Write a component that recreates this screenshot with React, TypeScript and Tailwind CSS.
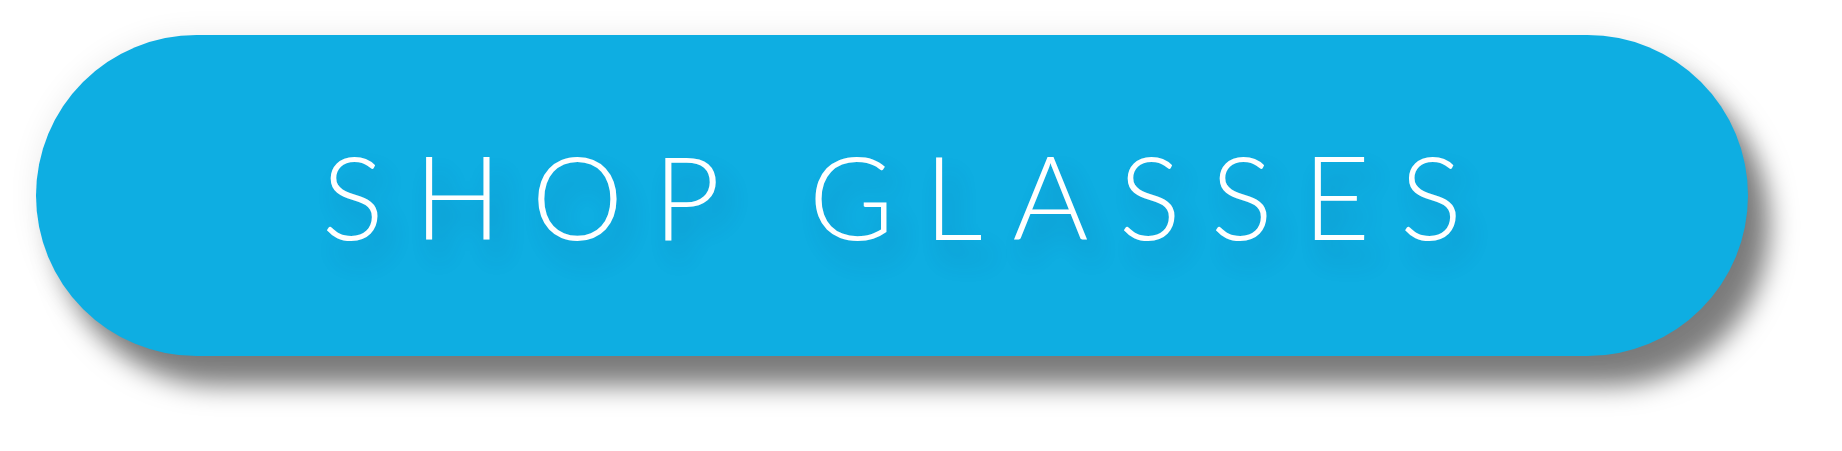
export default function App() {
  return (
    <div className="w-[1842px] h-[451px] bg-white pl-[36px] pt-[35px]">
      <button
        type="button"
        className="flex items-center justify-center w-[1712px] h-[321px] rounded-full bg-[#0eaee2] shadow-[22px_30px_26px_rgba(0,0,0,0.5),0_0_30px_rgba(0,0,0,0.08)]"
      >
        <span className="pl-[30px] text-white text-[116px] leading-none font-light tracking-[30px] font-['Lato','Liberation_Sans',sans-serif] [text-shadow:10px_18px_24px_rgba(0,60,110,0.24)]">
          SHOP GLASSES
        </span>
      </button>
    </div>
  );
}
